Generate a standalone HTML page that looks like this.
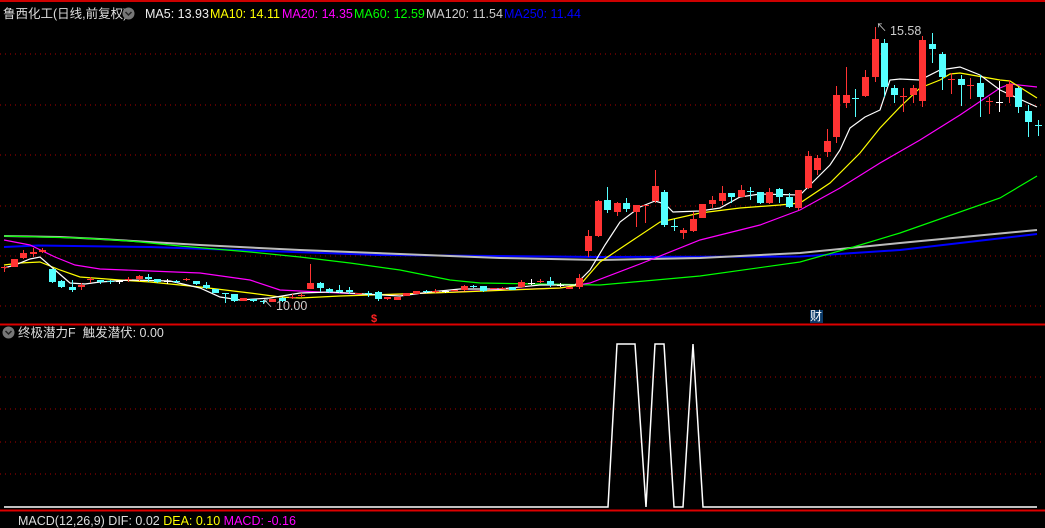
<!DOCTYPE html><html><head><meta charset="utf-8"><style>
body{margin:0;background:#000;width:1045px;height:516px;overflow:hidden;position:relative;font-family:"Liberation Sans","Noto Sans CJK SC",sans-serif}
.t{position:absolute;font-size:12.5px;white-space:nowrap;line-height:14px}
svg{position:absolute;left:0;top:0}
</style></head><body>
<svg id="s" width="1045" height="516"></svg>
<div class="t" style="left:3px;top:7px;color:#ddd">鲁西化工(日线,前复权)</div>
<svg width="14" height="14" style="left:122px;top:7px"><circle cx="6.5" cy="6.5" r="6" fill="#777"/><polyline points="3.5,5 6.5,8 9.5,5" fill="none" stroke="#222" stroke-width="1.5"/></svg>
<div class="t" style="left:145px;top:7px;color:#eee">MA5: 13.93</div>
<div class="t" style="left:210px;top:7px;color:#ff0">MA10: 14.11</div>
<div class="t" style="left:282px;top:7px;color:#f0f">MA20: 14.35</div>
<div class="t" style="left:354px;top:7px;color:#0f0">MA60: 12.59</div>
<div class="t" style="left:426px;top:7px;color:#ccc">MA120: 11.54</div>
<div class="t" style="left:504px;top:7px;color:#00f">MA250: 11.44</div>
<svg width="14" height="14" style="left:2px;top:326px"><circle cx="6.5" cy="6.5" r="6" fill="#777"/><polyline points="3.5,5 6.5,8 9.5,5" fill="none" stroke="#222" stroke-width="1.5"/></svg>
<div class="t" style="left:18px;top:326px;color:#ddd">终极潜力F &nbsp;触发潜伏: 0.00</div>
<div class="t" style="left:18px;top:514px;color:#ddd">MACD(12,26,9) DIF: 0.02 <span style="color:#ff0">DEA: 0.10</span> <span style="color:#f0f">MACD: -0.16</span></div>
<div class="t" style="left:276px;top:299px;color:#ccc">10.00</div>
<div class="t" style="left:262px;top:297px;color:#ccc;font-size:11px">↖</div>
<div class="t" style="left:890px;top:24px;color:#ccc">15.58</div>
<div class="t" style="left:876px;top:21px;color:#ccc;font-size:11px">↖</div>
<div class="t" style="left:371px;top:312px;color:#f22;font-size:11px;font-weight:bold">$</div>
<div class="t" style="left:810px;top:310px;width:13px;height:13px;background:#0b3a68;color:#fff;font-size:12px;line-height:13px">财</div>
<script>
var s=document.getElementById('s'),h='';
h+='<line x1="0" y1="1" x2="1045" y2="1" stroke="#c00" stroke-width="2"/>';
[54,105,155,206,256,306,377,409,442,474].forEach(function(y){h+='<line x1="0" y1="'+y+'" x2="1045" y2="'+y+'" stroke="#a00" stroke-dasharray="1 4"/>'});
h+='<line x1="0" y1="324.5" x2="1045" y2="324.5" stroke="#d00" stroke-width="2"/><line x1="0" y1="510.5" x2="1045" y2="510.5" stroke="#d00" stroke-width="2"/>';
function pl(p,c,w){h+='<polyline fill="none" stroke="'+c+'" stroke-width="'+(w||1)+'" points="'+p+'"/>'}
pl('4,247 38,245.5 150,247 380,255 600,257 800,256.5 900,250 1037,234','#00f',2);
pl('4,236 60,237 100,239 150,242 200,245 300,250 400,254 500,258 600,260 700,258 800,253 900,243 1037,230','#bbb',2);
pl('4,236 40,237 80,238 130,241 180,246 250,252 300,257 350,263 400,270 450,280 480,283 540,284 600,285 700,276 800,262 850,248 900,233 1000,198 1037,176','#0f0',1.2);
pl('4,240 30,245 55,257 75,265 100,269 150,271 200,273 250,280 280,290 320,292 380,295 430,293 500,290 560,288 590,283 640,264 700,240 760,225 800,210 840,188 880,163 920,140 960,115 1000,88 1010,84 1037,87','#f0f',1.2);
pl('4,265 20,263 40,262 60,270 80,277 120,280 150,282 200,287 250,293 280,297 300,298 340,296 400,294 460,292 510,290 560,288 580,285 600,262 630,242 660,222 700,213 740,208 780,205 800,203 830,183 860,153 880,128 900,107 920,88 940,80 950,74 960,73 1000,80 1010,81 1037,98','#ff0',1.2);
pl('4,268 15,265 30,259 40,257 55,270 70,283 85,284 100,282 130,280 170,281 200,288 220,297 240,300 270,298 300,293 330,292 400,296 430,292 460,289 500,289 540,285 575,285 590,270 605,245 620,222 640,207 655,201 665,204 673,212 700,211 720,208 740,197 760,194 800,195 815,180 830,165 840,150 850,128 865,117 880,110 890,80 900,79 920,80 940,70 960,67 980,75 1000,90 1037,107','#fff',1.2);
var C={r:'#ff3333',c:'#55ffff',w:'#fff'};
var d=[[4,267,268,266,272,'r'],[14,259,267,259,267,'r'],[23,253,258,250,259,'r'],[33,252,254,248,257,'r'],[42,250,252,248,253,'r'],[52,269,282,269,283,'c'],[61,281,287,280,288,'c'],[72,287,290,280,292,'c'],[81,285,287,283,290,'r'],[90,279,280,277,283,'r'],[100,280,282,280,284,'c'],[110,281,282,280,284,'c'],[119,281,282,280,284,'w'],[128,279,280,277,282,'r'],[139,276,279,275,281,'r'],[148,277,279,274,282,'c'],[157,279,282,279,283,'c'],[167,281,282,279,284,'w'],[176,281,282,280,283,'c'],[186,279,280,278,281,'r'],[196,281,284,281,285,'c'],[206,285,288,282,289,'c'],[215,289,293,289,293,'c'],[225,293,294,293,303,'c'],[234,294,301,294,302,'c'],[243,298,301,298,301,'r'],[253,299,301,299,302,'c'],[263,301,302,300,304,'c'],[272,299,302,299,302,'r'],[282,298,301,297,302,'c'],[292,297,298,294,299,'r'],[301,295,296,293,297,'r'],[310,283,289,264,289,'r'],[320,283,288,282,292,'c'],[329,289,292,288,293,'c'],[339,290,292,285,293,'c'],[349,290,292,287,294,'c'],[358,293,294,293,294,'r'],[368,293,294,291,297,'c'],[378,292,299,291,301,'c'],[387,297,299,297,300,'r'],[397,297,300,297,300,'r'],[406,293,296,293,296,'r'],[416,291,294,291,294,'r'],[426,291,292,290,293,'c'],[435,291,292,289,293,'r'],[445,291,292,290,293,'w'],[454,290,291,290,291,'r'],[464,286,290,285,291,'r'],[473,286,287,285,288,'c'],[483,286,291,286,292,'c'],[493,288,289,288,289,'r'],[502,288,289,287,289,'r'],[512,287,290,287,290,'c'],[521,282,287,280,288,'r'],[531,283,284,279,285,'w'],[540,281,282,279,283,'r'],[550,281,285,277,287,'c'],[560,285,286,283,287,'w'],[569,287,289,287,289,'r'],[579,278,287,274,289,'r'],
[588,236,251,230,257,'r'],[598,201,236,200,237,'r'],[607,200,210,187,213,'c'],[617,203,212,202,216,'r'],[626,203,209,198,212,'c'],[636,205,212,205,227,'r'],[645,205,206,205,223,'r'],[655,186,201,170,203,'r'],[664,192,225,190,227,'c'],[674,226,227,219,231,'c'],[683,230,233,228,239,'r'],[693,219,231,212,232,'r'],[702,204,218,204,218,'r'],[712,200,204,196,208,'r'],[722,193,201,186,205,'r'],[731,193,197,193,203,'c'],[741,190,197,185,197,'r'],[750,191,192,187,200,'c'],[760,192,203,192,204,'c'],[769,192,203,188,204,'r'],[779,189,197,188,203,'c'],[789,197,207,193,208,'c'],[798,190,208,190,210,'r'],[808,156,188,151,189,'r'],[817,158,170,155,175,'r'],[827,141,152,129,157,'r'],[836,95,137,86,143,'r'],[846,95,103,67,108,'r'],[855,98,99,89,117,'c'],[865,77,96,70,97,'r'],[875,39,77,27,82,'r'],[884,43,87,39,97,'c'],[894,88,95,85,103,'c'],[903,96,97,88,112,'r'],[913,88,95,85,103,'r'],[922,40,101,36,107,'r'],[932,44,49,33,63,'c'],[942,54,77,52,90,'c'],[951,79,80,73,94,'r'],[961,79,85,75,106,'c'],[970,85,86,78,99,'r'],[980,83,97,75,117,'c'],[989,101,102,97,114,'r'],[999,102,103,81,112,'w'],[1009,84,97,80,103,'r'],[1018,88,107,87,113,'c'],[1028,111,122,105,137,'c'],[1038,125,126,120,136,'c']];
d.forEach(function(k){var c=C[k[5]];h+='<line x1="'+(k[0]+.5)+'" y1="'+k[3]+'" x2="'+(k[0]+.5)+'" y2="'+k[4]+'" stroke="'+c+'"/><rect x="'+(k[0]-3)+'" y="'+k[1]+'" width="7" height="'+Math.max(1,k[2]-k[1])+'" fill="'+c+'"/>'});
pl('4,507 608,507 617,344 635,344 646,507 655,344 664,344 674,507 683,507 693,344 703,507 1037,507','#fff',1.5);
s.innerHTML=h;
</script>
</body></html>
